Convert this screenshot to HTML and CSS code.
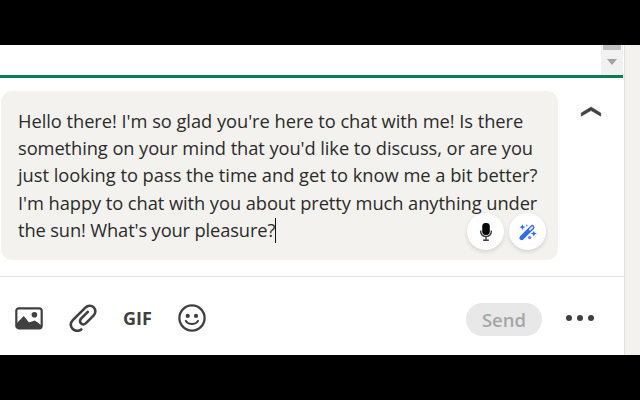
FILE: index.html
```html
<!DOCTYPE html>
<html lang="en">
<head>
<meta charset="utf-8">
<title>Message composer</title>
<link rel="stylesheet" href="styles.css">
</head>
<body>
<main class="app">
  <section class="panel">
    <div class="history">
      <div class="scrollbar"><span class="thumb"></span><span class="arrow"></span></div>
    </div>
    <div class="compose">
      <div class="editor">
        <p class="line l1">Hello there! I'm so glad you're here to chat with me! Is there</p>
        <p class="line l2">something on your mind that you'd like to discuss, or are you</p>
        <p class="line l3">just looking to pass the time and get to know me a bit better?</p>
        <p class="line l4">I'm happy to chat with you about pretty much anything under</p>
        <p class="line l5">the sun! What's your pleasure?<span class="caret"></span></p>
        <div class="tools">
          <button class="round" aria-label="Dictate">
            <svg width="14" height="20" viewBox="0 0 14 20"><rect x="3.2" y="1" width="7.6" height="12" rx="3.4" fill="#080808"/><path d="M1.7 8.5v1.2a5.3 4.8 0 0 0 10.6 0V8.5M7 14.5v3.2" fill="none" stroke="#444" stroke-width="1.5"/><path d="M4.2 18.2h5.6" stroke="#333" stroke-width="1.5"/></svg>
          </button>
          <button class="round" aria-label="Rewrite">
            <svg width="20" height="20" viewBox="0 0 20 20"><path d="M3.7 15.8 14.2 5.3" stroke="#326ced" stroke-width="4.6" stroke-linecap="round"/><path d="M12 7.5l2.3-2.3" stroke="#e3ebff" stroke-width="1.9" stroke-linecap="round"/><path d="M4.4 2.2l.9 2 2 .9-2 .9-.9 2-.9-2-2-.9 2-.9zM15.8 8.7l.9 2 2.2.9-2.2.9-.9 2-.9-2-2.2-.9 2.2-.9z" fill="#326ced"/><circle cx="11.6" cy="15.6" r="1.7" fill="#5b8bf4"/><circle cx="8.6" cy="3.4" r="1" fill="#6d98f6"/></svg>
          </button>
        </div>
      </div>
      <svg class="chevron" width="22" height="13" viewBox="0 0 22 13"><path d="M1.2 11.2V8L11 2l9.8 6v3.2L11 5.6z" fill="#404040" stroke="#404040" stroke-width=".5"/></svg>
    </div>
    <footer class="bar">
      <svg class="image" width="28" height="23" viewBox="0 0 28 23"><rect x="1.3" y="1.3" width="25.4" height="20" rx="2.5" fill="none" stroke="#404040" stroke-width="2.2"/><path d="M2 16 8.8 9l5 6.2 1.7-.2 4.3-1.4L26 18v3H2z" fill="#404040"/><circle cx="19.4" cy="7.8" r="2.8" fill="#404040"/></svg>
      <svg class="clip" width="28" height="28" viewBox="0 0 28 28"><path d="M12.2 25.4c-2.4 2.1-6.3 1.8-8.5-.4-2.7-2.7-2.5-6.2.1-8.8L16.4 3.6c2.3-2.3 6-2.5 8.3-.2s2.1 6-.2 8.3l-7.5 7.5c-1.5 1.5-3.7 1.5-5 .2s-1.3-3.4.2-4.9l6.6-6.6" fill="none" stroke="#404040" stroke-width="2.6" stroke-linecap="round"/></svg>
      <span class="gif">GIF</span>
      <svg class="smile" width="28" height="28" viewBox="0 0 28 28"><circle cx="14" cy="14" r="12.6" fill="none" stroke="#404040" stroke-width="2.3"/><circle cx="9.7" cy="11.9" r="2.1" fill="#404040"/><circle cx="18" cy="11.9" r="2.1" fill="#404040"/><path d="M7.8 16.9c2.4 4 9.8 4 12.2 0" fill="none" stroke="#404040" stroke-width="2" stroke-linecap="round"/></svg>
      <button class="send">Send</button>
      <span class="more"><i></i><i></i><i></i></span>
    </footer>
  </section>
</main>
</body>
</html>
```
FILE: styles.css
```css
* { box-sizing: border-box; margin: 0; padding: 0; }
body {
  width: 640px;
  height: 400px;
  padding: 45px 0;
  overflow: hidden;
  background: #000;
  font-family: "Open Sans", "Noto Sans", sans-serif;
}
button { border: 0; font: inherit; }
svg { display: block; flex: none; }
.app { height: 310px; background: #f3f2ee; }
.panel {
  display: flex;
  flex-direction: column;
  width: 625px;
  height: 310px;
  background: #fff;
  border-right: 1px solid #dfdfdb;
}
.history {
  display: flex;
  justify-content: flex-end;
  width: 623px;
  height: 33px;
  border-bottom: 3px solid #0b7d56;
}
.scrollbar {
  display: flex;
  flex-direction: column;
  align-items: center;
  width: 22px;
  background: #f1f1f1;
}
.thumb { width: 18px; height: 5px; background: #c1c1c1; }
.arrow {
  margin-top: 9px;
  border: 5px solid transparent;
  border-top: 6px solid #a2a2a2;
  border-bottom: 0;
}
.compose {
  display: flex;
  height: 199px;
  padding: 13px 0 0 1px;
  border-bottom: 1px solid #e4e4e4;
}
.editor {
  position: relative;
  width: 557px;
  height: 169px;
  padding: 16px 0 0 17px;
  border-radius: 11px;
  background: #f3f2ee;
  color: #2b2b2b;
}
.line { font-size: 18.3px; line-height: 27.2px; white-space: nowrap; }
.l1 { letter-spacing: -0.04px; }
.l2 { letter-spacing: -0.075px; }
.l3 { letter-spacing: -0.01px; }
.l4 { letter-spacing: -0.065px; }
.l5 { letter-spacing: -0.13px; }
.caret {
  display: inline-block;
  width: 1px;
  height: 25px;
  margin-bottom: -6px;
  vertical-align: baseline;
  background: #111;
}
.tools { position: absolute; right: 12px; bottom: 10px; display: flex; gap: 5px; }
.round {
  display: flex;
  align-items: center;
  justify-content: center;
  width: 37px;
  height: 37px;
  border-radius: 50%;
  background: #fff;
  box-shadow: 0 2px 4px rgba(0, 0, 0, .13);
}
.chevron { margin: 14px 0 0 22px; }
.bar { display: flex; align-items: center; height: 78px; padding: 4px 0 0 15px; }
.clip { margin-left: 26px; }
.gif {
  width: 30px;
  margin-left: 26px;
  color: #404040;
  font-size: 18px;
  font-weight: 700;
}
.smile { margin-left: 25px; }
.send {
  width: 76px;
  height: 33px;
  margin: 3px 0 0 260px;
  border-radius: 17px;
  background: #e8e8e8;
  color: #a6a6a6;
  font-size: 18.5px;
  font-weight: 600;
  line-height: 32px;
}
.more { display: flex; gap: 5px; margin-left: 24px; }
.more i { width: 6px; height: 6px; border-radius: 50%; background: #404040; }
```
